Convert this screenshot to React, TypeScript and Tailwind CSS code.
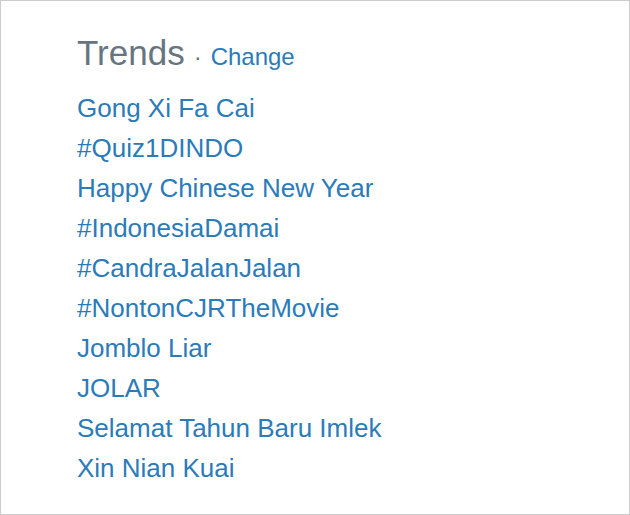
export default function App() {
  const trends = [
    "Gong Xi Fa Cai",
    "#Quiz1DINDO",
    "Happy Chinese New Year",
    "#IndonesiaDamai",
    "#CandraJalanJalan",
    "#NontonCJRTheMovie",
    "Jomblo Liar",
    "JOLAR",
    "Selamat Tahun Baru Imlek",
    "Xin Nian Kuai",
  ];
  return (
    <div
      className="w-[630px] h-[515px] bg-white border border-[#cccccc] pl-[76px] pt-[34px]"
      style={{ fontFamily: '"Liberation Sans", Arial, sans-serif' }}
    >
      <div className="flex items-baseline leading-[35px] mb-[14px]">
        <span className="text-[35px] text-[#66757f]">Trends</span>
        <span className="text-[24px] text-[#66757f] ml-[9px]">·</span>
        <span className="text-[24px] text-[#2b7bb9] ml-[9px]">Change</span>
      </div>
      <ul className="flex flex-col">
        {trends.map((t) => (
          <li key={t} className="text-[26px] leading-[40px] text-[#2b7bb9]">
            {t}
          </li>
        ))}
      </ul>
    </div>
  );
}
